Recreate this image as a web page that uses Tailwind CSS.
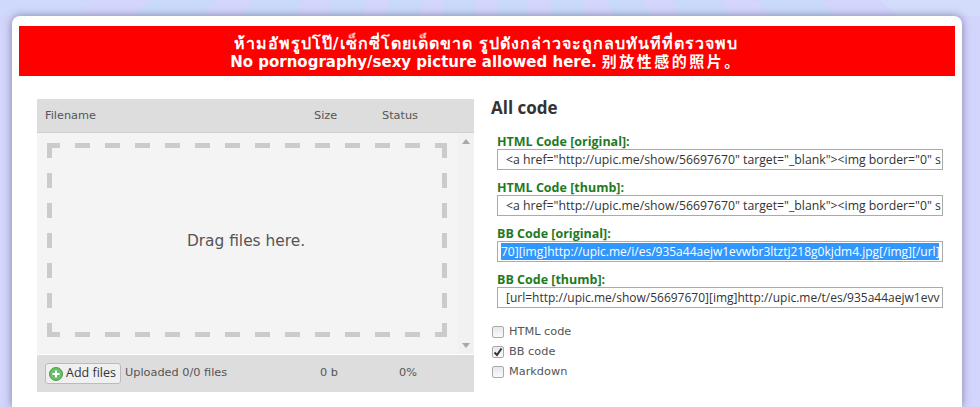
<!DOCTYPE html>
<html lang="en">
<head>
    <meta charset="UTF-8">
    <title>upic.me</title>
    <script src="https://cdn.jsdelivr.net/npm/@tailwindcss/browser@4"></script>
</head>
<body class="relative h-[407px] overflow-hidden bg-[#d4d5fc] font-['DejaVu_Sans',sans-serif] text-[#444]">
    <!-- background rays -->
    <svg class="absolute inset-0" width="980" height="407" viewBox="0 0 980 407">
        <polygon points="0,0 92,0 78,16 0,16" fill="#cfd9fb" />
        <polygon points="880,0 980,0 980,16 897,16" fill="#d3dcfb" />
        <g fill="#c8d9f9">
            <polygon points="150,0 215,0 203,16 135,16" />
            <polygon points="252,0 303,0 295,16 243,16" />
            <polygon points="331,0 367,0 362,16 327,16" />
            <polygon points="390,0 423,0 419,16 385,16" />
            <polygon points="445,0 475,0 475,16 443,16" />
            <polygon points="497,0 528,0 528,16 497,16" />
            <polygon points="550,0 582,0 587,16 552,16" />
            <polygon points="607,0 643,0 650,16 613,16" />
            <polygon points="672,0 720,0 730,16 680,16" />
            <polygon points="757,0 822,0 833,16 770,16" />
        </g>
    </svg>

    <div class="relative ml-3 mt-4 h-[391px] w-[950px] rounded-t-lg bg-white px-[7px] pt-[10px] shadow-[0_0_8px_rgba(70,70,110,0.6)]">
        <!-- warning banner -->
        <div class="flex h-[50px] flex-col items-center justify-center bg-[#ff0000] pt-1 pr-[2px] font-['DejaVu_Sans','Noto_Sans_CJK_SC',sans-serif] text-[15px] leading-[19px] font-bold text-white">
            <p class="text-[16px] tracking-[1px]">ห้ามอัพรูปโป๊/เซ็กซี่โดยเด็ดขาด รูปดังกล่าวจะถูกลบทันทีที่ตรวจพบ</p>
            <p>No pornography/sexy picture allowed here. <span class="tracking-[2.5px]">别放性感的照片。</span></p>
        </div>

        <div class="mt-[23px] flex pl-[18px]">
            <!-- uploader -->
            <div class="w-[437px] shrink-0 text-[11.3px]">
                <div class="flex h-[34px] items-center border-b border-[#d0d0d0] bg-[#dddddd] pt-[2px] pl-2 text-[#555]">
                    <span class="w-[269px]">Filename</span>
                    <span class="w-[68px]">Size</span>
                    <span>Status</span>
                </div>
                <div class="flex h-[221px] bg-[#f4f4f4]">
                    <div class="flex-1 p-[10px]">
                        <div class="relative flex h-[194px] w-[400px] items-center justify-center pr-[2px] text-[15.4px] text-[#555]">
                            <svg class="absolute inset-0" width="400" height="194" viewBox="0 0 400 194" fill="none" stroke="#cbcbcb" stroke-width="5">
                                <path d="M0 2.5H400M0 191.5H400" stroke-dasharray="15 15" stroke-dashoffset="2" />
                                <path d="M2.5 0V194M397.5 0V194" stroke-dasharray="15 15" />
                            </svg>
                            <span class="relative pt-1">Drag files here.</span>
                        </div>
                    </div>
                    <div class="flex w-4 flex-col items-center justify-between bg-[#f1f1f1] py-[6px]">
                        <span class="h-0 w-0 border-x-[4px] border-b-[5px] border-x-transparent border-b-[#a8a8a8]"></span>
                        <span class="h-0 w-0 border-x-[4px] border-t-[5px] border-x-transparent border-t-[#a8a8a8]"></span>
                    </div>
                </div>
                <div class="flex h-[38px] items-center border-t border-white bg-[#dddddd] pl-2 text-[#555]">
                    <button class="flex h-[21px] w-[76px] items-center rounded-[3px] border border-[#bbb] bg-[#f0f0f0] pl-[3px] text-[12.5px] font-['Open_Sans',sans-serif] text-[#333]">
                        <svg class="mr-[3px] shrink-0" width="14" height="14" viewBox="0 0 14 14">
                            <circle cx="7" cy="7" r="6.5" fill="#6abf69" stroke="#4a9a4a" />
                            <path d="M7 3.5v7M3.5 7h7" stroke="#fff" stroke-width="2" />
                        </svg>
                        Add files
                    </button>
                    <span class="ml-1 w-[195px]">Uploaded 0/0 files</span>
                    <span class="w-[79px]">0 b</span>
                    <span>0%</span>
                </div>
            </div>

            <!-- codes -->
            <div class="ml-[17px] flex-1 font-['Open_Sans',sans-serif]">
                <h2 class="text-[17px] leading-[18px] font-bold text-[#333]">All code</h2>
                <div class="mt-[18px] ml-[6px] w-[446px] space-y-[11px]">
                    <div>
                        <p class="text-[12.5px] leading-[14px] font-bold text-[#1f7a1f]">HTML Code [original]:</p>
                        <div class="h-[21px] overflow-hidden border border-[#aaa] pl-2 text-[12.25px] leading-[19px] whitespace-nowrap text-[#333]">&lt;a href="http://upic.me/show/56697670" target="_blank"&gt;&lt;img border="0" s</div>
                    </div>
                    <div>
                        <p class="text-[12.5px] leading-[14px] font-bold text-[#1f7a1f]">HTML Code [thumb]:</p>
                        <div class="h-[21px] overflow-hidden border border-[#aaa] pl-2 text-[12.25px] leading-[19px] whitespace-nowrap text-[#333]">&lt;a href="http://upic.me/show/56697670" target="_blank"&gt;&lt;img border="0" s</div>
                    </div>
                    <div>
                        <p class="text-[12.5px] leading-[14px] font-bold text-[#1f7a1f]">BB Code [original]:</p>
                        <div class="h-[21px] overflow-hidden border border-[#aaa] px-[3px] py-[1px] text-[12px] leading-[17px] whitespace-nowrap text-white"><span class="inline-block w-[438px] overflow-hidden bg-[#3297fd]">70][img]http://upic.me/i/es/935a44aejw1evwbr3ltztj218g0kjdm4.jpg[/img][/url]</span></div>
                    </div>
                    <div>
                        <p class="text-[12.5px] leading-[14px] font-bold text-[#1f7a1f]">BB Code [thumb]:</p>
                        <div class="h-[21px] overflow-hidden border border-[#aaa] pl-2 text-[12px] leading-[19px] whitespace-nowrap text-[#333]">[url=http://upic.me/show/56697670][img]http://upic.me/t/es/935a44aejw1evv</div>
                    </div>
                </div>
                <div class="mt-[17px] ml-px space-y-[6px] text-[11.3px] font-['DejaVu_Sans',sans-serif] leading-[14px] text-[#555]">
                    <label class="flex items-center gap-[5px]"><span class="h-3 w-3 rounded-[2px] border border-[#aaa] bg-gradient-to-b from-[#e8e8e8] to-[#fafafa]"></span>HTML code</label>
                    <label class="flex items-center gap-[5px]"><span class="flex h-3 w-3 items-center justify-center rounded-[2px] border border-[#aaa] bg-gradient-to-b from-[#e8e8e8] to-[#fafafa]"><svg width="10" height="10" viewBox="0 0 10 10"><path d="M1.5 5.5L4 8l4.5-6.5" fill="none" stroke="#333" stroke-width="2" /></svg></span>BB code</label>
                    <label class="flex items-center gap-[5px]"><span class="h-3 w-3 rounded-[2px] border border-[#aaa] bg-gradient-to-b from-[#e8e8e8] to-[#fafafa]"></span>Markdown</label>
                </div>
            </div>
        </div>
    </div>
</body>
</html>
